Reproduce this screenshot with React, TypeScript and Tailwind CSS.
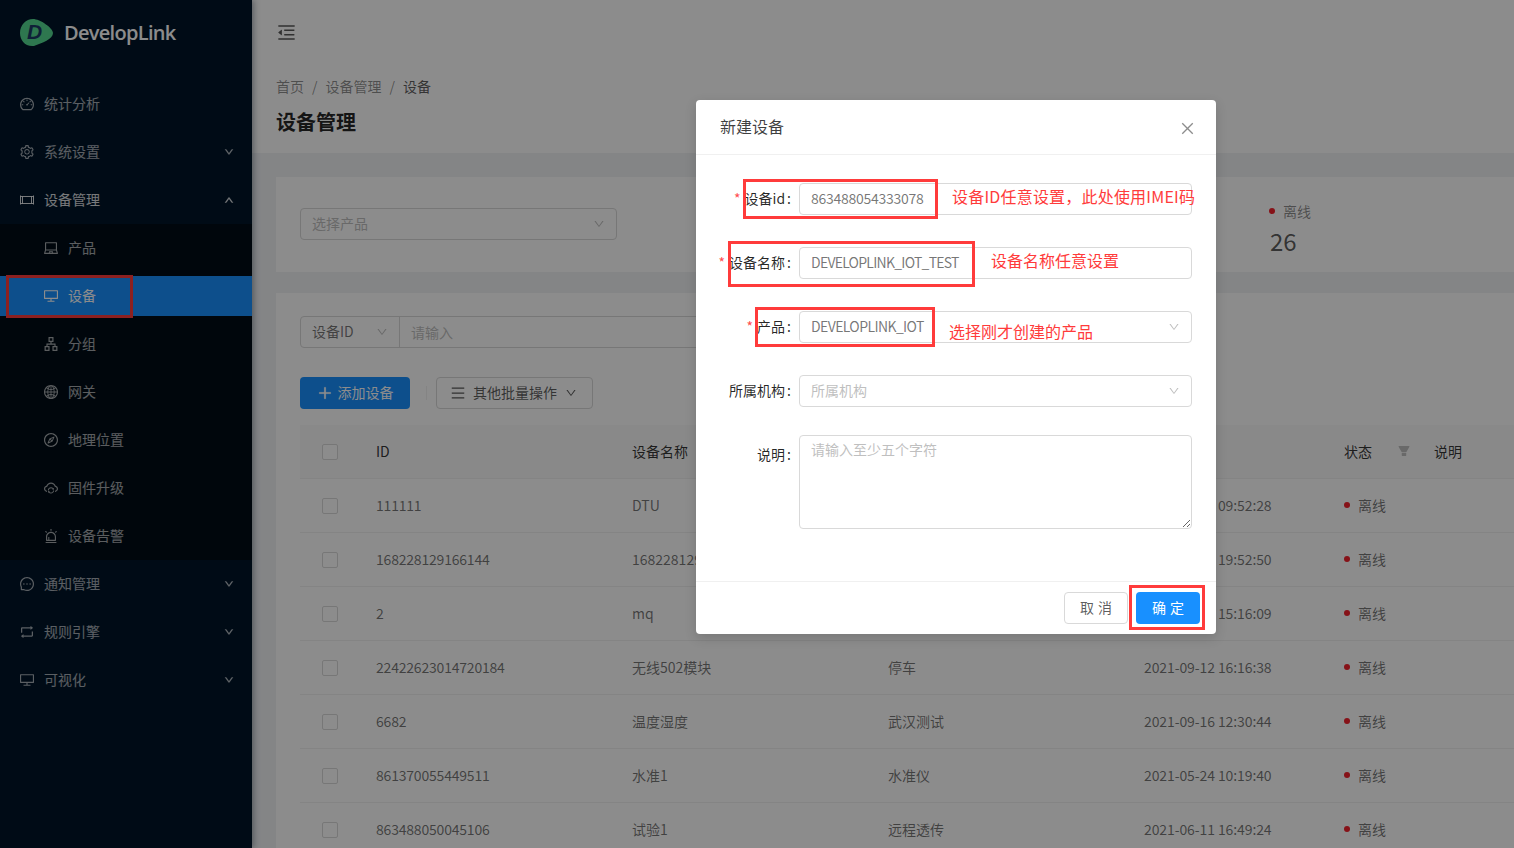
import React from "react";
import {
  AiOutlineDashboard, AiOutlineSetting, AiOutlineLaptop, AiOutlineDesktop, AiOutlineApartment,
  AiOutlineGlobal, AiOutlineCompass, AiOutlineCloudSync, AiOutlineAlert, AiOutlineMessage,
  AiOutlineRetweet, AiOutlineDown, AiOutlineUp, AiOutlineMenuFold, AiOutlineClose, AiOutlinePlus,
  AiOutlineMenu, AiFillFilter,
} from "react-icons/ai";

function DeviceIcon() {
  return (
    <svg width="14" height="14" viewBox="0 0 14 14" fill="none" stroke="currentColor" strokeWidth="1">
      <path d="M.5 2.5v9M13.5 2.5v9M.5 3.5h2M.5 10.5h2M11.5 3.5h2M11.5 10.5h2" />
      <rect x="2.5" y="3.5" width="9" height="7" />
    </svg>
  );
}

function Logo() {
  return (
    <svg width="33" height="29" viewBox="0 0 33 29">
      <path d="M13 1C20 1 33 10 33 15C33 21 22 25 14 28C5 29 0 22 0 15C0 7 6 1 13 1Z" fill="#55d990" />
      <text x="7" y="21" fontSize="21" fontWeight="700" fontStyle="italic" fill="#1c3a66" fontFamily="'Liberation Sans',sans-serif">D</text>
    </svg>
  );
}

function TopItem({ icon, label, arrow }: { icon: React.ReactNode; label: string; arrow?: "up" | "down" }) {
  return (
    <div className={`flex h-10 items-center pl-5 pr-[18px] text-sm ${arrow === "up" ? "text-white/85" : "text-white/65"}`}>
      <span className="flex w-[14px] justify-center text-base [&>svg]:shrink-0">{icon}</span>
      <span className="ml-2.5 flex-1 pb-0.5 leading-[22px]">{label}</span>
      {arrow === "down" && <AiOutlineDown className="text-[10px]" stroke="currentColor" strokeWidth={60} />}
      {arrow === "up" && <AiOutlineUp className="text-[10px]" stroke="currentColor" strokeWidth={60} />}
    </div>
  );
}

function SubItem({ icon, label, active }: { icon: React.ReactNode; label: string; active?: boolean }) {
  return (
    <div className={`flex h-10 items-center pl-11 text-sm ${active ? "bg-[#1890ff] text-white" : "text-white/65"}`}>
      <span className="flex w-[14px] justify-center text-base [&>svg]:shrink-0">{icon}</span>
      <span className="ml-2.5 pb-0.5 leading-[22px]">{label}</span>
    </div>
  );
}

function Sidebar() {
  return (
    <aside className="relative z-10 flex h-[848px] w-[252px] shrink-0 flex-col bg-[#001529] shadow-[2px_0_6px_rgba(0,21,41,0.35)]">
      <div className="flex h-16 items-center pl-5">
        <Logo />
        <span className="ml-[11px] mt-0.5 text-xl font-semibold leading-6 text-white [font-family:'Open_Sans',sans-serif] tracking-[-0.7px]">DevelopLink</span>
      </div>
      <div className="mt-5 flex flex-col gap-2">
        <TopItem icon={<AiOutlineDashboard />} label="统计分析" />
        <TopItem icon={<AiOutlineSetting />} label="系统设置" arrow="down" />
        <TopItem icon={<DeviceIcon />} label="设备管理" arrow="up" />
      </div>
      <div className="mt-1 flex flex-col gap-2 bg-[#000c17] py-1">
        <SubItem icon={<AiOutlineLaptop />} label="产品" />
        <SubItem icon={<AiOutlineDesktop />} label="设备" active />
        <SubItem icon={<AiOutlineApartment />} label="分组" />
        <SubItem icon={<AiOutlineGlobal />} label="网关" />
        <SubItem icon={<AiOutlineCompass />} label="地理位置" />
        <SubItem icon={<AiOutlineCloudSync />} label="固件升级" />
        <SubItem icon={<AiOutlineAlert />} label="设备告警" />
      </div>
      <div className="mt-1 flex flex-col gap-2">
        <TopItem icon={<AiOutlineMessage />} label="通知管理" arrow="down" />
        <TopItem icon={<AiOutlineRetweet />} label="规则引擎" arrow="down" />
        <TopItem icon={<AiOutlineDesktop />} label="可视化" arrow="down" />
      </div>
      <div className="pointer-events-none absolute left-[6px] top-[275px] h-[43px] w-[127px] border-[3px] border-[#ff3b3b]" />
    </aside>
  );
}

const rows = [
  ["111111", "DTU", "智能网关", "2021-08-19 09:52:28"],
  ["168228129166144", "168228129166144", "智能网关", "2021-08-20 19:52:50"],
  ["2", "mq", "智能网关", "2021-08-21 15:16:09"],
  ["22422623014720184", "无线502模块", "停车", "2021-09-12 16:16:38"],
  ["6682", "温度湿度", "武汉测试", "2021-09-16 12:30:44"],
  ["861370055449511", "水准1", "水准仪", "2021-05-24 10:19:40"],
  ["863488050045106", "试验1", "远程透传", "2021-06-11 16:49:24"],
];

const tableCols = "grid grid-cols-[60px_256px_256px_256px_200px_90px_1fr]";

function Checkbox() {
  return <span className="mx-auto block size-4 rounded-[2px] border border-[#d9d9d9] bg-white" />;
}

function Table() {
  return (
    <div className="mt-4 w-[1238px] text-sm leading-[22px]">
      <div className={`${tableCols} h-[54px] items-center border-b border-[#f0f0f0] bg-[#fafafa] text-black/80`}>
        <Checkbox />
        <span className="pb-0.5 pl-4">ID</span>
        <span className="pb-0.5 pl-4">设备名称</span>
        <span className="pb-0.5 pl-4">所属产品</span>
        <span className="pb-0.5 pl-4">注册时间</span>
        <span className="flex items-center pb-0.5 pl-4">状态<AiFillFilter className="ml-[25px] text-sm text-[#bfbfbf]" /></span>
        <span className="pb-0.5 pl-4">说明</span>
      </div>
      {rows.map((r) => (
        <div key={r[0]} className={`${tableCols} h-[54px] items-center border-b border-[#f0f0f0] bg-white text-black/55`}>
          <Checkbox />
          <span className="pb-0.5 pl-4 tracking-[-0.2px]">{r[0]}</span>
          <span className="truncate pb-0.5 pl-4">{r[1]}</span>
          <span className="pb-0.5 pl-4">{r[2]}</span>
          <span className="whitespace-nowrap pb-0.5 pl-4 tracking-[-0.1px]">{r[3]}</span>
          <span className="flex items-center pb-0.5 pl-4"><i className="mr-2 size-1.5 rounded-full bg-[#f5222d]" />离线</span>
          <span />
        </div>
      ))}
    </div>
  );
}

function Main() {
  return (
    <main className="flex h-[848px] min-w-0 flex-1 flex-col overflow-hidden bg-[#f0f2f5]">
      <header className="flex h-[65px] shrink-0 items-center bg-white pl-6 shadow-[0_1px_4px_rgba(0,21,41,0.08)]">
        <AiOutlineMenuFold className="text-[21px] text-black/65" />
      </header>
      <section className="h-[88px] shrink-0 bg-white pl-6 pt-[10px]">
        <div className="flex text-sm leading-[22px] text-black/45">
          <span>首页</span><span className="mx-2">/</span><span>设备管理</span><span className="mx-2">/</span><span className="text-black/65">设备</span>
        </div>
        <h1 className="mt-[11px] text-xl font-semibold leading-7 text-black/85">设备管理</h1>
      </section>
      <section className="ml-6 mt-6 flex h-[95px] w-[1238px] shrink-0 items-start bg-white pl-6 pt-6">
        <div className="mt-[7px] flex h-8 w-[317px] items-center justify-between rounded-[4px] border border-[#d9d9d9] px-[11px] text-sm text-[#bfbfbf]">
          <span className="pb-0.5">选择产品</span><AiOutlineDown className="text-xs" />
        </div>
        <div className="-mt-px ml-[652px] flex flex-col">
          <div className="flex items-center text-sm leading-[22px] text-black/45"><i className="mr-2 size-1.5 rounded-full bg-[#f5222d]" />离线</div>
          <div className="ml-px mt-[3px] text-2xl leading-8 text-black/65">26</div>
        </div>
      </section>
      <section className="ml-6 mt-[21px] w-[1238px] flex-1 bg-white pl-6 pt-[23px]">
        <div className="flex h-8 w-[760px] items-stretch rounded-[4px] border border-[#d9d9d9] text-sm">
          <div className="flex w-[99px] items-center justify-between border-r border-[#d9d9d9] px-[11px] text-black/55"><span className="pb-0.5">设备ID</span><AiOutlineDown className="text-xs text-[#bfbfbf]" /></div>
          <div className="flex flex-1 items-center px-[11px] text-[#bfbfbf]">请输入</div>
        </div>
        <div className="mt-[29px] flex h-8 items-center">
          <div className="flex h-8 w-[110px] items-center justify-center rounded-[4px] bg-[#1890ff] text-sm text-white">
            <AiOutlinePlus className="mr-[5px] text-base" stroke="currentColor" strokeWidth={40} /><span className="pb-0.5">添加设备</span>
          </div>
          <div className="ml-4 mr-[9px] h-[14px] w-px bg-[#f0f0f0]" />
          <div className="flex h-8 w-[157px] items-center rounded-[4px] border border-[#d9d9d9] bg-white pl-[13px] text-sm text-black/65">
            <AiOutlineMenu className="mr-[7px] text-base" /><span className="pb-0.5">其他批量操作</span><AiOutlineDown className="ml-2 text-xs" />
          </div>
        </div>
        <Table />
      </section>
    </main>
  );
}

function Field({ label, required, top, children }: { label: string; required?: boolean; top?: boolean; children: React.ReactNode }) {
  return (
    <div className={`flex ${top ? "items-start" : "items-center"}`}>
      <label className={`flex w-[79px] shrink-0 justify-end whitespace-nowrap pb-0.5 pr-2 text-sm leading-[22px] text-black/85 ${top ? "pt-2" : ""}`}>
        {required && <span className="mr-1 shrink-0 text-[#ff4d4f]">*</span>}
        <span className="shrink-0">{label}</span>
        <span className="ml-0.5 shrink-0">:</span>
      </label>
      {children}
    </div>
  );
}

const inputCls = "h-8 w-[393px] rounded-[4px] border border-[#d9d9d9] bg-white px-[11px] pb-0.5 text-sm text-black/55 outline-none placeholder:text-[#bfbfbf]";

function SelectBox({ text, placeholder }: { text: string; placeholder?: boolean }) {
  return (
    <div className={`flex h-8 w-[393px] items-center justify-between rounded-[4px] border border-[#d9d9d9] bg-white px-[11px] text-sm ${placeholder ? "text-[#bfbfbf]" : "tracking-[-0.6px] text-black/55"}`}>
      <span className="pb-0.5">{text}</span><AiOutlineDown className="text-xs text-[#bfbfbf]" />
    </div>
  );
}

function Note({ className, children }: { className: string; children: React.ReactNode }) {
  return <span className={`absolute whitespace-nowrap text-base leading-6 text-[#ff3b3b] ${className}`}>{children}</span>;
}

function Box({ className }: { className: string }) {
  return <div className={`pointer-events-none absolute border-[3px] border-[#ff3b3b] ${className}`} />;
}

function Dialog() {
  return (
    <div className="absolute left-[696px] top-[100px] z-30 flex h-[534px] w-[520px] flex-col rounded-[4px] bg-white shadow-[0_4px_12px_rgba(0,0,0,0.15)]">
      <div className="flex h-[55px] shrink-0 items-center justify-between border-b border-[#f0f0f0] pl-6 pr-[20px]">
        <span className="pb-0.5 text-base leading-[22px] text-black/75">新建设备</span>
        <AiOutlineClose className="mt-0.5 text-[17px] text-black/45" />
      </div>
      <div className="flex flex-1 flex-col gap-8 pl-6 pt-7">
        <Field label="设备id" required><input readOnly className={`${inputCls} tracking-[-0.27px]`} value="863488054333078" /></Field>
        <Field label="设备名称" required><input readOnly className={`${inputCls} tracking-[-0.75px]`} value="DEVELOPLINK_IOT_TEST" /></Field>
        <Field label="产品" required><SelectBox text="DEVELOPLINK_IOT" /></Field>
        <Field label="所属机构"><SelectBox text="所属机构" placeholder /></Field>
        <div className="-mt-1">
          <Field label="说明" top>
            <textarea readOnly placeholder="请输入至少五个字符" className="block h-[94px] w-[393px] rounded-[4px] border border-[#d9d9d9] bg-white px-[11px] pb-1 pt-0.5 text-sm leading-[22px] outline-none placeholder:text-[#bfbfbf]" />
          </Field>
        </div>
      </div>
      <div className="flex h-[53px] shrink-0 items-center justify-end gap-2 border-t border-[#f0f0f0] pr-4">
        <div className="flex h-8 w-16 items-center justify-center rounded-[4px] border border-[#d9d9d9] bg-white pb-0.5 pl-1 text-sm tracking-[4px] text-black/65">取消</div>
        <div className="flex h-8 w-16 items-center justify-center rounded-[4px] bg-[#1890ff] pb-0.5 pl-1 text-sm tracking-[4px] text-white">确定</div>
      </div>
      <Box className="left-[47px] top-[79px] h-[40px] w-[195px]" />
      <Box className="left-[32px] top-[141px] h-[46px] w-[247px]" />
      <Box className="left-[59px] top-[207px] h-[40px] w-[180px]" />
      <Box className="left-[433px] top-[485px] h-[45px] w-[76px]" />
      <Note className="left-[256px] top-[84px] tracking-[0.2px]">设备ID任意设置，此处使用IMEI码</Note>
      <Note className="left-[295px] top-[148px]">设备名称任意设置</Note>
      <Note className="left-[253px] top-[219px]">选择刚才创建的产品</Note>
    </div>
  );
}

export default function App() {
  return (
    <div className="relative flex h-[848px] w-[1514px] overflow-hidden [font-family:'Noto_Sans_CJK_SC','Noto_Sans',sans-serif]">
      <Sidebar />
      <Main />
      <div className="absolute inset-0 z-20 bg-black/45" />
      <Dialog />
    </div>
  );
}
